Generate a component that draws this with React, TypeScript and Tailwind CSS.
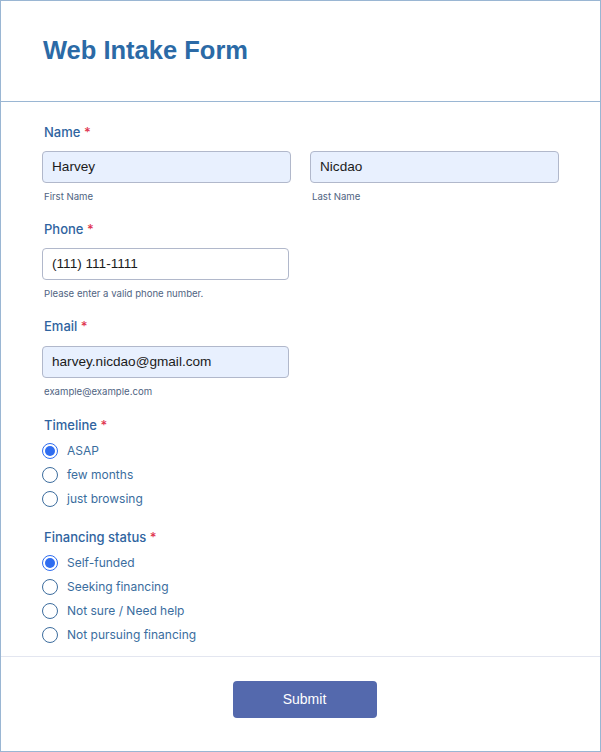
const Label = ({ text }: { text: string }) => (
  <div className="h-[20px] pl-[2px] text-[13px] leading-[20px] font-medium text-[#2f64a0]">
    {text} <span className="text-[#e0344f]">*</span>
  </div>
);

const Radio = ({ label, checked }: { label: string; checked?: boolean }) => (
  <div className="flex h-[24px] items-center">
    {checked ? (
      <div className="flex h-[16px] w-[16px] items-center justify-center rounded-full border-[1.5px] border-[#2f6df0] bg-white">
        <div className="h-[10px] w-[10px] rounded-full bg-[#2f6df0]" />
      </div>
    ) : (
      <div className="h-[16px] w-[16px] rounded-full border-[1.5px] border-[#3d6d9e] bg-white" />
    )}
    <span className="ml-[9px] text-[12px] text-[#3a6d9e]">{label}</span>
  </div>
);

const Input = ({ value, filled }: { value: string; filled?: boolean }) => (
  <div
    className={
      "flex h-[32px] items-center rounded-[4px] border border-[#b1b8cb] pl-[9px] font-['Liberation_Sans',Arial,sans-serif] text-[13.6px] text-[#1b1b1b] " +
      (filled ? "bg-[#e8f0fe]" : "bg-white")
    }
  >
    {value}
  </div>
);

const Hint = ({ text }: { text: string }) => (
  <div className="mt-[7px] h-[14px] pl-[2px] text-[9.6px] leading-[14px] text-[#4f6482]">{text}</div>
);

export default function App() {
  return (
    <div className="h-[752px] w-[601px] bg-white font-['Inter','Noto_Sans',sans-serif]">
      <div className="flex h-full w-full flex-col border border-[#9ab6d3]">
        <div className="h-[101px] border-b border-[#9ab6d3] pl-[42px] pt-[33px]">
          <h1 className="font-['Liberation_Sans',Arial,sans-serif] text-[25.5px] font-bold leading-[32px] text-[#2b6aa6]">
            Web Intake Form
          </h1>
        </div>

        <div className="px-[41px] pt-[20px]">
          <Label text="Name" />
          <div className="mt-[9px] flex gap-[19px]">
            <div className="w-[249px]">
              <Input value="Harvey" filled />
              <Hint text="First Name" />
            </div>
            <div className="w-[249px]">
              <Input value="Nicdao" filled />
              <Hint text="Last Name" />
            </div>
          </div>

          <div className="mt-[15px]">
            <Label text="Phone" />
          </div>
          <div className="mt-[9px] w-[247px]">
            <Input value="(111) 111-1111" />
            <Hint text="Please enter a valid phone number." />
          </div>

          <div className="mt-[15px]">
            <Label text="Email" />
          </div>
          <div className="mt-[10px] w-[247px]">
            <Input value="harvey.nicdao@gmail.com" filled />
            <Hint text="example@example.com" />
          </div>

          <div className="mt-[16px]">
            <Label text="Timeline" />
          </div>
          <div className="mt-[4px] flex flex-col">
            <Radio label="ASAP" checked />
            <Radio label="few months" />
            <Radio label="just browsing" />
          </div>

          <div className="mt-[16px]">
            <Label text="Financing status" />
          </div>
          <div className="mt-[4px] flex flex-col">
            <Radio label="Self-funded" checked />
            <Radio label="Seeking financing" />
            <Radio label="Not sure / Need help" />
            <Radio label="Not pursuing financing" />
          </div>
        </div>

        <div className="mt-[9px] flex justify-center border-t border-[#e3e6f0] pl-[8px] pt-[24px]">
          <button className="h-[37px] w-[144px] rounded-[4px] bg-[#5469ad] font-['Liberation_Sans',Arial,sans-serif] text-[14px] text-white">
            Submit
          </button>
        </div>
      </div>
    </div>
  );
}
